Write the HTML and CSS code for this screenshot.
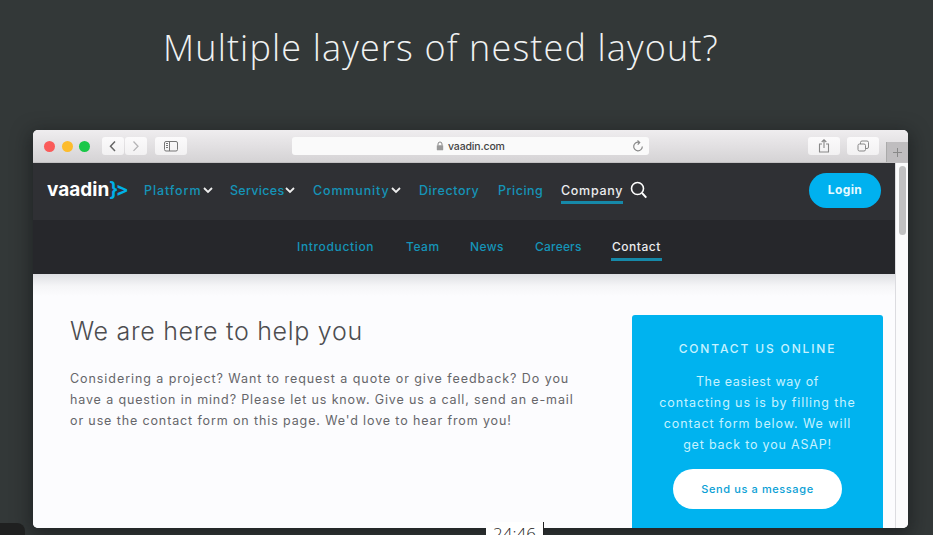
FILE: index.html
```html
<!DOCTYPE html>
<html lang="en">
<head>
<meta charset="utf-8">
<title>Multiple layers of nested layout?</title>
<link rel="stylesheet" href="styles.css">
</head>
<body>
<main class="slide">
  <h1 class="slide-title">Multiple layers of nested layout?</h1>

  <section class="window">
    <div class="toolbar">
      <div class="lights"><i class="light red"></i><i class="light yellow"></i><i class="light green"></i></div>
      <div class="history">
        <span class="tool"><svg width="22" height="18" viewBox="0 0 22 18"><path d="M13 4.500 8.500 9.200l4.500 4.700" stroke="#666" stroke-width="1.500"/></svg></span>
        <span class="tool"><svg width="22" height="18" viewBox="0 0 22 18"><path d="m8.500 4.500 4.500 4.700-4.500 4.700" stroke="#b5b4b6" stroke-width="1.300"/></svg></span>
      </div>
      <span class="tool panel"><svg width="32" height="18" viewBox="0 0 32 18"><rect x="9.500" y="4.500" width="13" height="9.500" rx="1.500" stroke="#777"/><path d="M14.500 4.500V14M11 6.500h2M11 8.500h2M11 10.500h2" stroke="#777"/></svg></span>
      <div class="address">
        <svg class="lock" width="8" height="10" viewBox="0 0 8 10"><path d="M2 4.500V3a2 2 0 0 1 4 0v1.500" stroke="#888"/><rect x=".8" y="4.200" width="6.400" height="5" rx=".5" fill="#999"/></svg>
        <span class="url">vaadin.com</span>
        <svg class="reload" width="12" height="13" viewBox="0 0 12 13"><path d="M10.300 6.500a4.300 4.300 0 1 1-3.400-4.200M5.500.5 7.700 2.500 5.700 4.700" stroke="#888" stroke-width="1.200"/></svg>
      </div>
      <span class="tool share"><svg width="32" height="18" viewBox="0 0 32 18"><path d="M14 7h-2.500v8h9V7H18M16 11V2.700M13.700 5 16 2.700 18.300 5" stroke="#888" stroke-width="1.100"/></svg></span>
      <span class="tool tabs"><svg width="32" height="18" viewBox="0 0 32 18"><rect x="11" y="7" width="7.500" height="7" rx="1.500" stroke="#888"/><path d="M13.500 7V5.500q0-1.500 1.500-1.500h5q1.500 0 1.500 1.500V10q0 1.500-1.500 1.500h-1.500" stroke="#888"/></svg></span>
      <span class="newtab"><svg width="21" height="20" viewBox="0 0 21 20"><path d="M10.500 6v9M6 10.500h9" stroke="#888"/></svg></span>
    </div>

    <div class="viewport">
      <div class="page">
        <header class="site-nav">
          <div class="logo"><span class="word">vaadin</span><span class="mark">}&gt;</span></div>
          <nav class="links">
            <a class="platform">Platform<svg class="chev" width="10" height="8" viewBox="0 0 10 8"><path d="m1 2 4 4 4-4"/></svg></a>
            <a class="services">Services<svg class="chev" width="10" height="8" viewBox="0 0 10 8"><path d="m1 2 4 4 4-4"/></svg></a>
            <a class="community">Community<svg class="chev" width="10" height="8" viewBox="0 0 10 8"><path d="m1 2 4 4 4-4"/></svg></a>
            <a class="directory">Directory</a>
            <a class="pricing">Pricing</a>
            <a class="company active">Company</a>
          </nav>
          <svg class="search" width="18" height="18" viewBox="0 0 18 18"><circle cx="7.500" cy="7.500" r="6" stroke="#fff" stroke-width="1.600"/><path d="m12 12 4.300 4.700" stroke="#fff" stroke-width="1.900"/></svg>
          <a class="login">Login</a>
        </header>
        <nav class="sub-nav">
          <a class="introduction">Introduction</a>
          <a class="team">Team</a>
          <a class="news">News</a>
          <a class="careers">Careers</a>
          <a class="contact active">Contact</a>
        </nav>
        <div class="content">
          <article class="intro">
            <h2>We are here to help you</h2>
            <p><span class="l1">Considering a project? Want to request a quote or give feedback? Do you</span><br><span class="l2">have a question in mind? Please let us know. Give us a call, send an e-mail</span><br><span class="l3">or use the contact form on this page. We'd love to hear from you!</span></p>
          </article>
          <aside class="card">
            <h3>CONTACT US ONLINE</h3>
            <p><span class="c1">The easiest way of</span><br><span class="c2">contacting us is by filling the</span><br><span class="c3">contact form below. We will</span><br><span class="c4">get back to you ASAP!</span></p>
            <a class="send">Send us a message</a>
          </aside>
        </div>
      </div>
      <div class="scrollbar"><div class="thumb"></div></div>
    </div>
  </section>
  <div class="corner"></div>
  <div class="timestamp">24:46</div>
</main>
</body>
</html>
```
FILE: styles.css
```css
* { box-sizing: border-box; }
body { margin: 0; background: #333838; font-family: Inter, "Open Sans", sans-serif; }
svg { display: block; fill: none; flex: none; }
h1, h2, h3, p { margin: 0; }
.slide { position: relative; width: 933px; height: 535px; overflow: hidden; }
.slide-title { height: 130px; padding: 23px 0 0 163px; font: 300 36px/50px "Open Sans", sans-serif; letter-spacing: 1.150px; color: #f0f2f2; white-space: nowrap; }
.window { position: relative; width: 875px; height: 398px; margin-left: 33px; border-radius: 5px; overflow: hidden; background: #fcfcfe; box-shadow: 0 5px 18px 3px rgba(15, 18, 20, .5); }

.toolbar { display: flex; align-items: center; height: 33px; padding-left: 11px; background: linear-gradient(#efedef, #d5d3d5); border-bottom: 1px solid #c3c1c3; }
.lights { display: flex; gap: 6.500px; width: 58px; }
.light { width: 11px; height: 11px; border-radius: 50%; }
.red { background: #fa5b5a; }
.yellow { background: #fdbc2d; }
.green { background: #19c748; }
.history { display: flex; gap: 1px; }
.tool { display: block; height: 18px; border-radius: 3px; background: linear-gradient(#fbfafb, #f2f1f2); }
.panel { margin-left: 8px; }
.address { display: flex; align-items: center; width: 357px; height: 18px; margin-left: 105px; padding: 0 5px 0 144px; border-radius: 3px; background: #fafafa; }
.url { margin-left: 4px; padding-top: 2px; font: 500 10.500px/20px Inter, sans-serif; letter-spacing: -.15px; color: #444; }
.reload { margin-left: auto; }
.share { margin-left: 159px; }
.tabs { margin-left: 7px; }
.newtab { align-self: flex-end; margin-left: auto; background: #bfbdbf; border-left: 1px solid #aaa; }

.viewport { display: flex; height: 365px; }
.page { width: 862px; overflow: hidden; }
.scrollbar { width: 13px; padding: 3px 3px 0; background: #fbfbfc; border-left: 1px solid #dcdce0; }
.thumb { width: 7px; height: 69px; border-radius: 4px; background: #c1c1c2; }

.site-nav { display: flex; align-items: center; height: 57px; padding: 0 14px 3px; background: #2f3034; }
.logo { display: flex; align-items: center; width: 97px; font: 700 19px/26px Inter, sans-serif; color: #fff; }
.mark { color: #00b0e8; letter-spacing: -2.500px; }
.links, .sub-nav { display: flex; font-weight: 500; color: #1594b8; white-space: nowrap; }
.links { font-size: 12.500px; }
.sub-nav { font-size: 12px; }
.links a { display: flex; align-items: center; height: 26px; }
.chev { margin-left: auto; stroke: #eee; stroke-width: 1.800; }
.platform { width: 69px; margin-right: 17px; letter-spacing: .9px; }
.services { width: 65px; margin-right: 18px; letter-spacing: .3px; }
.community { width: 88px; margin-right: 18px; letter-spacing: .85px; }
.directory { width: 60px; margin-right: 19px; letter-spacing: .57px; }
.pricing { width: 45px; margin-right: 18px; letter-spacing: .5px; }
.company { width: 62px; letter-spacing: .7px; }
.active { color: #ececee; border-bottom: 3px solid #1689a9; }
.links .active { height: 27px; margin-bottom: -1px; padding-top: 2px; }
.search { margin-left: 7px; }
.login { width: 72px; height: 35px; margin-left: auto; border-radius: 18px; background: #00b1ef; color: #e5faff; font-size: 12px; font-weight: 700; line-height: 34px; text-align: center; letter-spacing: .4px; }
.sub-nav { height: 54px; padding: 14px 0 0 264px; background: #26272b; line-height: 26px; }
.sub-nav a { height: 26px; letter-spacing: .5px; }
.sub-nav .introduction { width: 77px; margin-right: 32px; letter-spacing: .65px; }
.team { width: 33px; margin-right: 31px; }
.sub-nav .news { width: 33px; margin-right: 32px; letter-spacing: .4px; }
.sub-nav .careers { width: 46px; margin-right: 30px; letter-spacing: .2px; }
.sub-nav .contact { width: 51px; height: 27px; padding-left: 1px; }

.content { display: flex; align-items: flex-start; justify-content: space-between; height: 254px; padding: 41px 12px 0 37px; background: linear-gradient(#dedfe3, #f5f5f7 12px, #fcfcfe 22px); }
.intro h2 { font: 300 25px/32px Inter, sans-serif; letter-spacing: .7px; color: #4d4d50; white-space: nowrap; }
.intro p { margin-top: 21px; font-size: 12.500px; line-height: 21px; color: #66666a; white-space: nowrap; }
.l1 { letter-spacing: .940px; }
.l2 { letter-spacing: .865px; }
.l3 { letter-spacing: .880px; }
.card { width: 251px; height: 214px; padding-top: 23px; border-radius: 3px 3px 0 0; background: #00b3ef; color: #c6f2ff; text-align: center; white-space: nowrap; }
.card h3 { font-size: 12px; font-weight: 500; line-height: 22px; letter-spacing: 1.850px; }
.card p { margin-top: 11px; font-size: 12.500px; line-height: 21px; }
.c1 { letter-spacing: .65px; }
.c2 { letter-spacing: .9px; }
.c3 { letter-spacing: .93px; }
.c4 { letter-spacing: .8px; }
.send { display: block; width: 169px; height: 40px; margin: 14px auto 0; border-radius: 20px; background: #fff; color: #0aa0d5; font-size: 11px; font-weight: 500; line-height: 41px; letter-spacing: .6px; }

.corner { position: absolute; left: 0; top: 523px; width: 25px; height: 12px; border-radius: 0 8px 0 0; background: #1f2020; }
.timestamp { position: absolute; left: 486px; top: 522px; width: 58px; height: 22px; border-right: 1px solid #222; background: #fff; color: #222; font: 300 17px/24px "Open Sans", sans-serif; text-align: center; }
```
